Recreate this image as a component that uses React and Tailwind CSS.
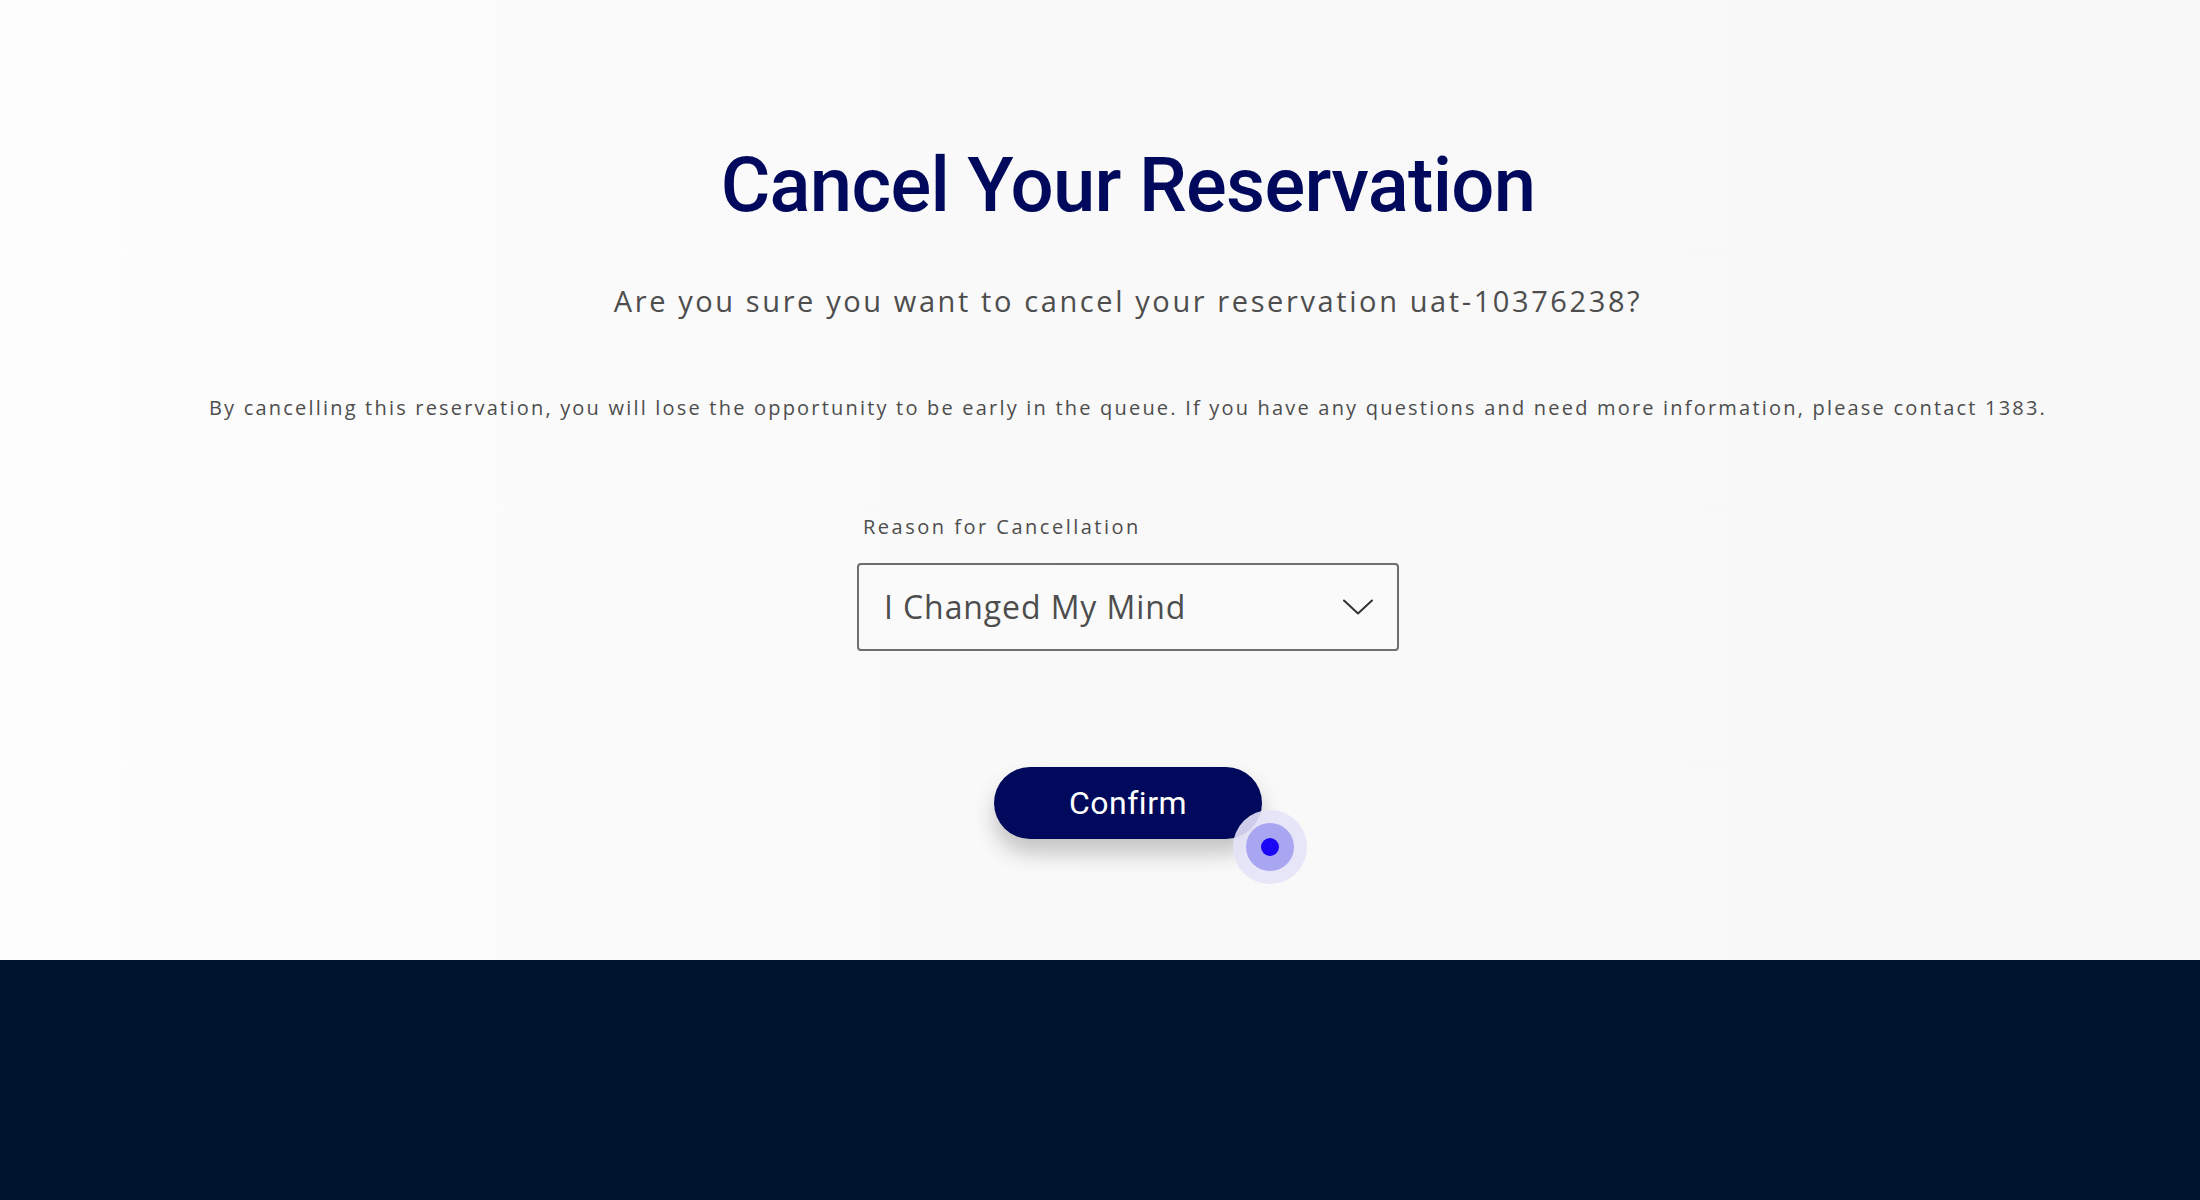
const RESERVATION_ID = "uat-10376238";

const Chevron = () => (
  <svg width="30" height="16" viewBox="0 0 30 16" fill="none" className="text-[#333]">
    <path d="M1 1.5 L15 14.5 L29 1.5" stroke="currentColor" strokeWidth="2" strokeLinecap="round" strokeLinejoin="round" />
  </svg>
);

const CancelReservation = () => {
  return (
    <section className="h-[960px] bg-gradient-to-r from-[#fdfdfd] via-[#f9f9f9] to-[#f8f8f8] pl-[56px]">
      <div className="flex flex-col items-center pt-[145px]">
        {/* Heading */}
        <h1 className="font-['Roboto',sans-serif] text-[76px] leading-[80px] font-medium tracking-[-0.7px] text-[#00095b]">
          Cancel Your Reservation
        </h1>

        <p className="mt-[56px] font-['Open_Sans',sans-serif] text-[29px] leading-[40px] tracking-[2.6px] text-[#4d4d4d]">
          Are you sure you want to cancel your reservation {RESERVATION_ID}?
        </p>

        <p className="mt-[73px] font-['Open_Sans',sans-serif] text-[20px] leading-[28px] tracking-[2.2px] text-[#4d4d4d]">
          By cancelling this reservation, you will lose the opportunity to be
          early in the queue. If you have any questions and need more
          information, please contact 1383.
        </p>

        {/* Reason select */}
        <div className="mt-[91px] flex w-[542px] flex-col">
          <label className="pl-[6px] font-['Open_Sans',sans-serif] text-[20px] leading-[28px] tracking-[2.5px] text-[#4d4d4d]">
            Reason for Cancellation
          </label>
          <button
            type="button"
            className="mt-[22px] flex h-[88px] items-center justify-between rounded-[4px] border-2 border-[#6e6e6e] bg-[#fafafa] pl-[25px] pr-[24px]"
          >
            <span className="font-['Open_Sans',sans-serif] text-[32px] tracking-[0.9px] text-[#4d4d4d]">
              I Changed My Mind
            </span>
            <Chevron />
          </button>
        </div>

        {/* Confirm */}
        <div className="relative mt-[116px]">
          <button
            type="button"
            className="flex h-[72px] w-[268px] items-center justify-center rounded-full bg-[#00095b] font-['Roboto',sans-serif] text-[32px] tracking-[0.5px] text-white shadow-[0_14px_22px_rgba(0,0,0,0.22)]"
          >
            Confirm
          </button>

          {/* click indicator */}
          <div className="absolute left-[239px] top-[43px] flex h-[74px] w-[74px] items-center justify-center rounded-full bg-[#e4e3f8]/90">
            <div className="flex h-[48px] w-[48px] items-center justify-center rounded-full bg-[#a9a6f1]">
              <div className="h-[18px] w-[18px] rounded-full bg-[#1a06f5]" />
            </div>
          </div>
        </div>
      </div>
    </section>
  );
};

export default function App() {
  return (
    <div className="min-h-screen w-full bg-[#00142e]">
      <CancelReservation />
      <footer className="h-[240px] bg-[#00142e]" />
    </div>
  );
}
